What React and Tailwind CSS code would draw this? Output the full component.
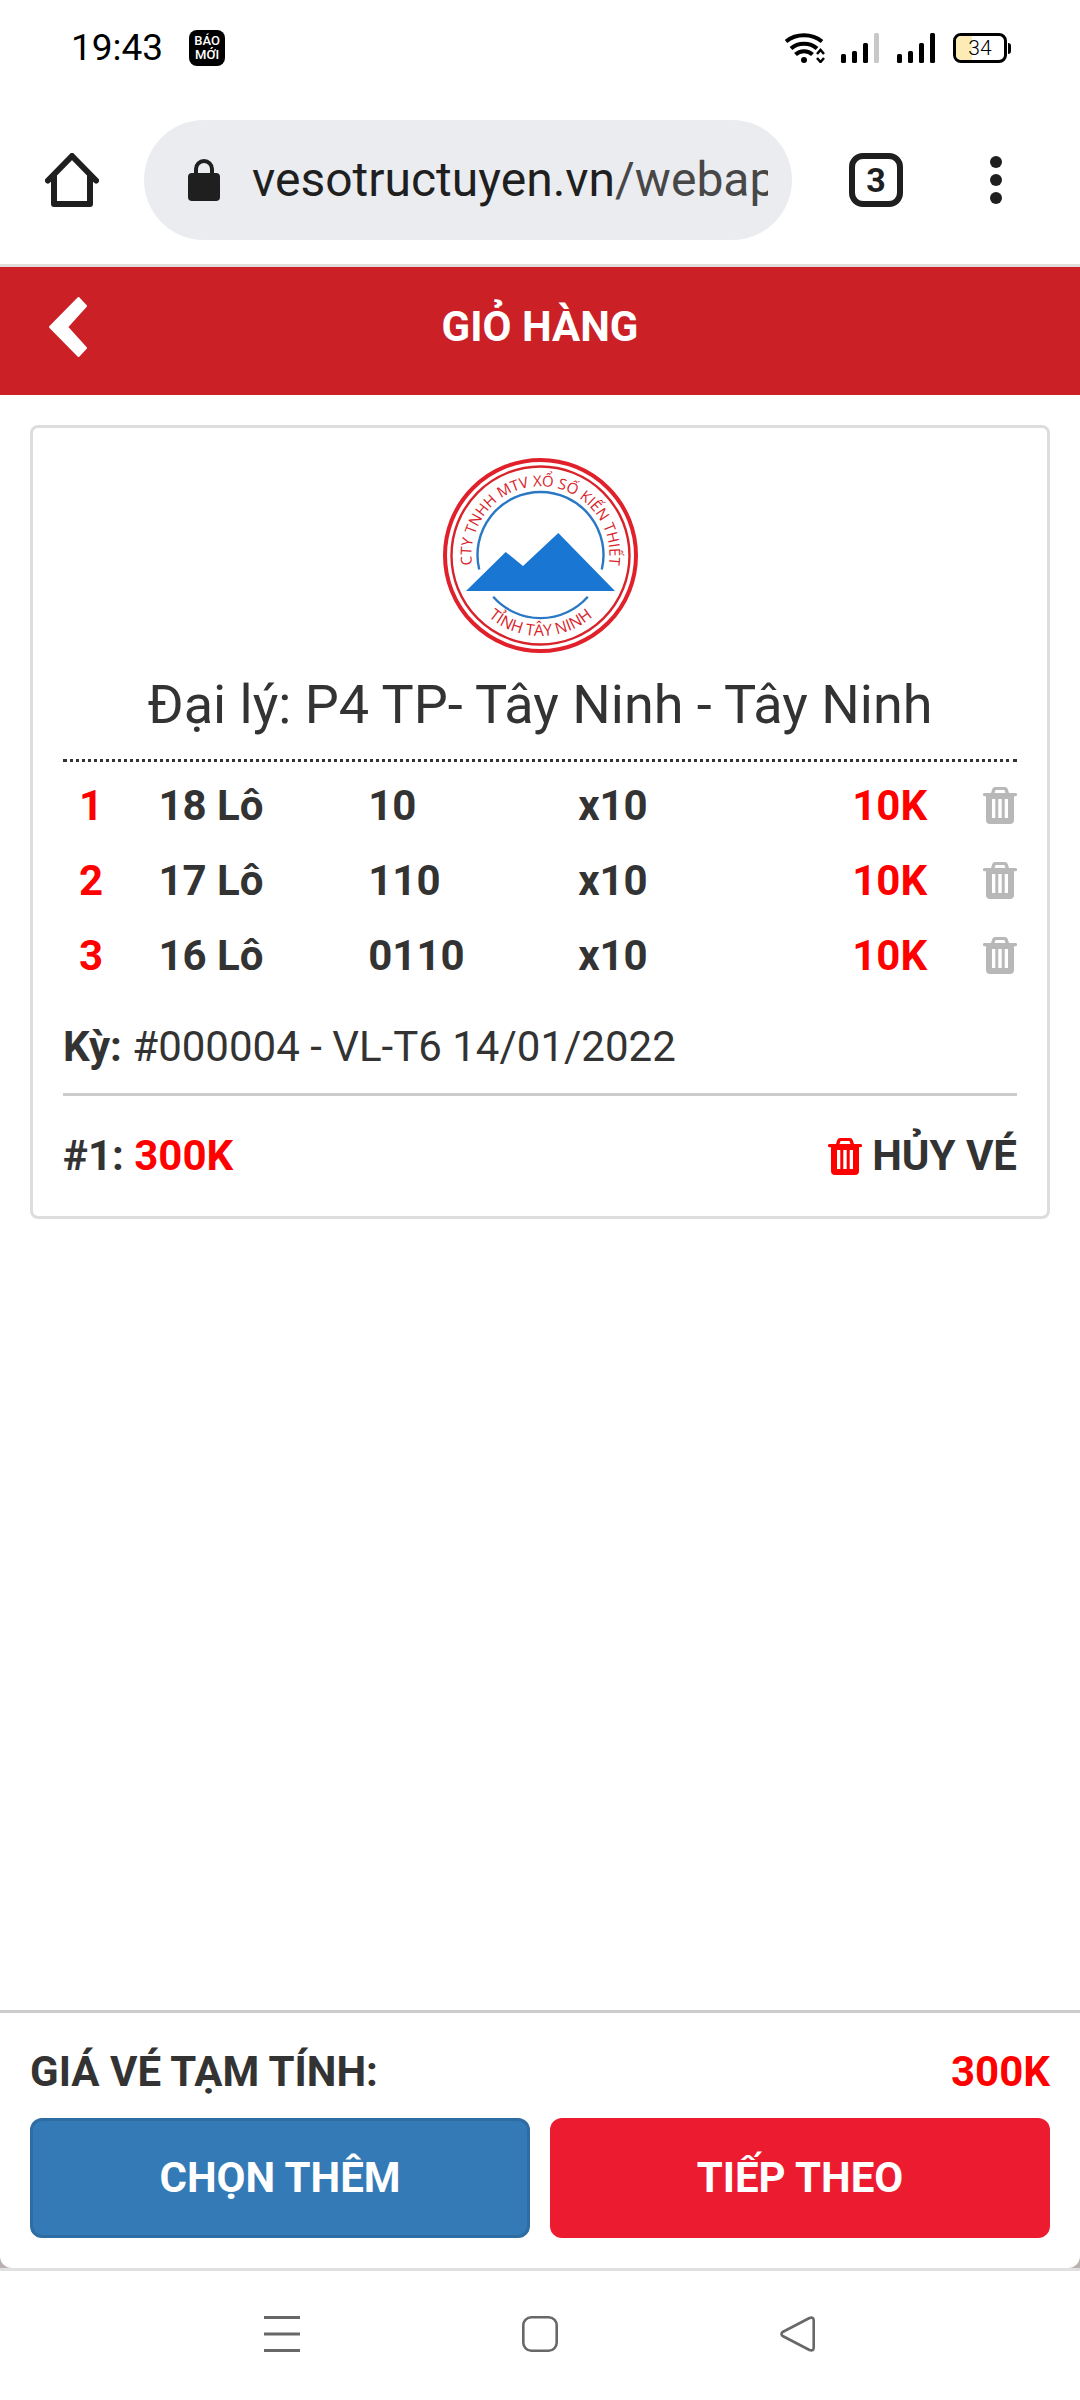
import React, { useState } from "react";

const items = [
  { id: 1, type: "18 Lô", numbers: "10", times: "x10", price: "10K" },
  { id: 2, type: "17 Lô", numbers: "110", times: "x10", price: "10K" },
  { id: 3, type: "16 Lô", numbers: "0110", times: "x10", price: "10K" },
];

function WifiIcon() {
  return (
    <svg className="w-10 h-[30px]" viewBox="0 0 40 30" fill="none" stroke="#000" strokeWidth="4">
      <path d="M1 8.5C11 .2 27 .2 37 8.5" />
      <path d="M6 15.5C13 9 25 9 32 15.5" />
      <path d="M10.500 21.500C15 17 23 17 27.500 21.500" />
      <circle cx="19" cy="27" r="3" fill="#000" stroke="none" />
      <path d="M32 21l3.500-4 3.500 4M32 25l3.500 4 3.500-4" strokeWidth="2.500" />
    </svg>
  );
}

function SignalIcon({ weak }) {
  return (
    <svg className="w-[38px] h-[30px]" viewBox="0 0 38 30" fill="#000">
      <rect x="0" y="21" width="5" height="9" rx="1.500" />
      <rect x="11" y="18" width="5" height="12" rx="1.500" />
      <rect x="22" y="10" width="5" height="20" rx="1.500" />
      <rect x="33" y="0" width="5" height="30" rx="1.500" fill={weak ? "#c8c8c8" : "#000"} />
    </svg>
  );
}

function Battery({ level }) {
  return (
    <div className="flex items-center gap-px">
      <div className="relative w-[54px] h-[30px] border-3 border-black rounded-lg overflow-hidden flex items-center justify-center">
        <div className="absolute inset-y-0 left-0 bg-[#fdebb6]" style={{ width: `${level}%` }} />
        <span className="relative text-[21px] leading-6 font-light text-black">{level}</span>
      </div>
      <div className="w-[3px] h-[11px] bg-black rounded-r-sm" />
    </div>
  );
}

function StatusBar() {
  return (
    <div className="h-24 pl-[71px] pr-[69px] flex items-center justify-between bg-white">
      <div className="flex items-center gap-[26px]">
        <span className="text-[37px] leading-10 text-black">19:43</span>
        <div className="size-9 rounded-lg bg-black text-white text-[13px] leading-[14px] font-medium flex flex-col items-center justify-center">
          <span>BÁO</span>
          <span>MỚI</span>
        </div>
      </div>
      <div className="flex items-center gap-[18px]">
        <div className="flex items-center gap-4">
          <WifiIcon />
          <SignalIcon weak />
        </div>
        <SignalIcon />
        <Battery level={34} />
      </div>
    </div>
  );
}

function BrowserBar() {
  return (
    <div className="h-[171px] pl-[45px] pr-[78px] flex items-center bg-white border-b-3 border-[#e3dede] text-[#1f1f1f]">
      <button aria-label="Home" className="shrink-0">
        <svg className="size-[54px]" viewBox="0 0 54 54" fill="none" stroke="currentColor" strokeWidth="6" strokeLinecap="round" strokeLinejoin="round">
          <path d="M3 27.500 27 3l24 24.500" />
          <path d="M9 23v28h36V23" />
        </svg>
      </button>
      <button className="flex-1 min-w-0 h-[120px] ml-[45px] pl-11 pr-6 rounded-full bg-[#ebecf0] flex items-center gap-8">
        <svg className="w-8 h-[42px] shrink-0" viewBox="0 0 32 42">
          <rect x="0" y="14" width="32" height="28" rx="4" fill="currentColor" />
          <path d="M8 16v-6a8 8 0 0 1 16 0v6" fill="none" stroke="currentColor" strokeWidth="4" />
        </svg>
        <span className="flex-1 min-w-0 overflow-hidden whitespace-nowrap text-left text-[48px] leading-[60px]">
          vesotructuyen.vn<span className="text-[#474747]">/webapp</span>
        </span>
      </button>
      <button
        aria-label="Tabs"
        className="shrink-0 size-[54px] ml-[57px] border-6 border-[#1f1f1f] rounded-[14px] flex items-center justify-center text-[34px] leading-10 font-bold"
      >
        3
      </button>
      <button aria-label="Menu" className="shrink-0 ml-[87px] flex flex-col gap-1.5">
        <span className="size-3 rounded-full bg-[#1f1f1f]" />
        <span className="size-3 rounded-full bg-[#1f1f1f]" />
        <span className="size-3 rounded-full bg-[#1f1f1f]" />
      </button>
    </div>
  );
}

function TrashIcon({ className }) {
  return (
    <svg className={`w-[34px] h-[37px] ${className}`} viewBox="0 0 34 37" fill="currentColor">
      <path
        fillRule="evenodd"
        d="M12 0h10q2 0 2.700 2L26 6h6.500a1.500 1.500 0 0 1 0 3.200H31V33q0 4-4 4H7q-4 0-4-4V9.200H1.500a1.500 1.500 0 0 1 0-3.200H8L9.300 2Q10 0 12 0ZM12.600 3 11.500 6h11L21.400 3ZM9 12v19h3.300V12ZM15.300 12v19h3.400V12ZM21.700 12v19H25V12Z"
      />
    </svg>
  );
}

function Logo() {
  return (
    <svg className="block mx-auto size-[195px]" viewBox="0 0 195 195" fill="none">
      <defs>
        <path id="logo-top" d="M29.600 109.500a69 69 0 1 1 135.800 0" />
        <path id="logo-bottom" d="M17 97.500a80.500 80.500 0 0 0 161 0" />
      </defs>
      <circle cx="97.500" cy="97.500" r="95.500" stroke="#e0202a" strokeWidth="4" />
      <circle cx="97.500" cy="97.500" r="89" stroke="#d8232a" strokeWidth="2.400" />
      <path d="M36.200 111.500A63 63 0 1 1 158.800 111.500" stroke="#2a78c4" strokeWidth="2.400" />
      <path d="M50.200 138.700A63 63 0 0 0 144.800 138.700" stroke="#2a78c4" strokeWidth="2.400" />
      <path d="M23 133 62.700 94 80 108 115.300 75 172 133Z" fill="#1976d2" />
      <g fill="#d8232a" fontFamily="'Open Sans', sans-serif" textAnchor="middle">
        <text fontSize="15">
          <textPath href="#logo-top" startOffset="50%">CTY TNHH MTV XỔ SỐ KIẾN THIẾT</textPath>
        </text>
        <text fontSize="16">
          <textPath href="#logo-bottom" startOffset="50%">TỈNH TÂY NINH</textPath>
        </text>
      </g>
    </svg>
  );
}

function Ticket({ rows, onRemove }) {
  return (
    <section className="border-3 border-[#ddd] rounded-lg p-[30px]">
      <Logo />
      <h2 className="mt-[22px] mb-6 text-center text-[54px] leading-[60px]">Đại lý: P4 TP- Tây Ninh - Tây Ninh</h2>
      <div className="border-t-3 border-dotted border-[#333] pt-1.5">
        <table className="w-full table-fixed font-bold">
          <colgroup>
            <col className="w-[10%]" />
            <col className="w-[22%]" />
            <col className="w-[22%]" />
            <col className="w-[22%]" />
            <col className="w-[15%]" />
            <col />
          </colgroup>
          <tbody>
            {rows.map((row) => (
              <tr key={row.id} className="h-[75px]">
                <td className="pl-4 text-[#f00]">{row.id}</td>
                <td>{row.type}</td>
                <td>{row.numbers}</td>
                <td>{row.times}</td>
                <td className="pr-1 text-right text-[#f00]">{row.price}</td>
                <td>
                  <button aria-label={`Xóa ${row.id}`} onClick={() => onRemove(row.id)} className="block ml-auto">
                    <TrashIcon className="text-[#b8b8b8]" />
                  </button>
                </td>
              </tr>
            ))}
          </tbody>
        </table>
      </div>
      <p className="mt-6 pb-4 border-b-3 border-[#ccc]">
        <b>Kỳ:</b> #000004 - VL-T6 14/01/2022
      </p>
      <div className="pt-[30px] flex items-center justify-between font-bold">
        <span>
          #1: <span className="text-[#f00]">300K</span>
        </span>
        <button className="flex items-center gap-2.5">
          <TrashIcon className="text-[#f00]" />
          HỦY VÉ
        </button>
      </div>
    </section>
  );
}

function NavBar() {
  return (
    <nav className="border-t-3 border-[#e0e0e0] bg-white pt-[45px] pb-12 flex justify-center gap-[222px] text-[#686868]">
      <button aria-label="Recent">
        <svg className="size-9" viewBox="0 0 36 36" stroke="currentColor" strokeWidth="3">
          <path d="M0 1.500h36M0 18h36M0 34.500h36" />
        </svg>
      </button>
      <button aria-label="Home">
        <svg className="size-9" viewBox="0 0 36 36" fill="none" stroke="currentColor" strokeWidth="2.600">
          <rect x="1.300" y="1.300" width="33.400" height="33.400" rx="8" />
        </svg>
      </button>
      <button aria-label="Back">
        <svg className="size-9" viewBox="0 0 36 36" fill="none" stroke="currentColor" strokeWidth="2.600" strokeLinejoin="round">
          <path d="M29.500 2 2.600 16Q.4 18 2.600 20L29.500 34Q33.700 35.500 33.700 31.500V4.500Q33.700.5 29.500 2Z" />
        </svg>
      </button>
    </nav>
  );
}

export default function App() {
  const [rows, setRows] = useState(items);

  return (
    <div className="min-h-screen flex flex-col bg-white font-['Roboto',sans-serif] text-[42px] leading-[60px] text-[#333]">
      <StatusBar />
      <BrowserBar />
      <div className="flex-1 flex flex-col bg-[#b9b2b0]">
        <div className="flex-1 flex flex-col bg-white rounded-b-xl">
          <header className="grid grid-cols-[1fr_auto_1fr] items-center bg-[#cb2026] px-[49px] pt-[30px] pb-[38px] text-white">
            <button aria-label="Quay lại" className="justify-self-start">
              <svg className="w-[38px] h-[60px]" viewBox="0 0 38 60" fill="currentColor" stroke="currentColor" strokeWidth="2" strokeLinejoin="round">
                <path d="M29.500 1 37 9 18 30l19 21-7.500 8L1 30Z" />
              </svg>
            </button>
            <h1 className="font-bold">GIỎ HÀNG</h1>
          </header>
          <main className="flex-1 p-[30px]">
            <Ticket rows={rows} onRemove={(id) => setRows(rows.filter((r) => r.id !== id))} />
          </main>
          <footer className="border-t-3 border-[#ccc] px-[30px] pt-[29px] pb-[30px] font-bold">
            <div className="flex justify-between">
              <span>GIÁ VÉ TẠM TÍNH:</span>
              <span className="text-[#f00]">300K</span>
            </div>
            <div className="mt-4 grid grid-cols-2 gap-5 text-white">
              <button className="h-[120px] rounded-xl border-3 border-[#2e6da4] bg-[#337ab7]">CHỌN THÊM</button>
              <button className="h-[120px] rounded-xl bg-[#ed1b2f]">TIẾP THEO</button>
            </div>
          </footer>
        </div>
      </div>
      <NavBar />
    </div>
  );
}
